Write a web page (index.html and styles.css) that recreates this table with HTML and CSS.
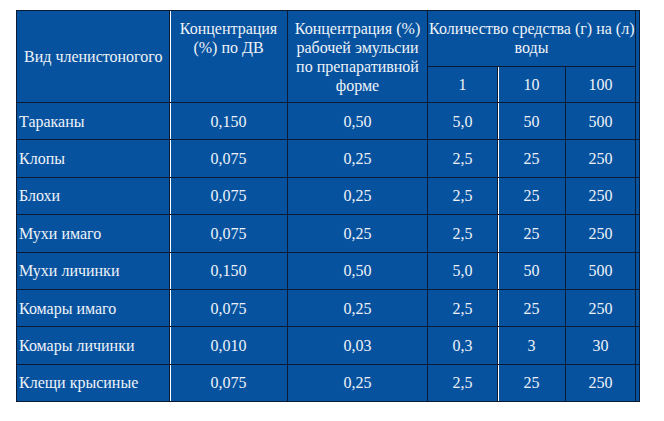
FILE: index.html
```html
<!DOCTYPE html>
<html lang="ru">
<head>
<meta charset="utf-8">
<link rel="stylesheet" href="styles.css">
</head>
<body>
<table class="grid">
  <colgroup>
    <col class="c-name">
    <col class="c-dv">
    <col class="c-em">
    <col class="c-q1">
    <col class="c-q2">
    <col class="c-q3">
    <col class="c-pad">
  </colgroup>
  <thead>
    <tr class="h1">
      <th rowspan="2" class="name-h">Вид членистоногого</th>
      <th rowspan="2" class="top sep">Концентрация<br>(%) по ДВ</th>
      <th rowspan="2">Концентрация (%)<br>рабочей эмульсии<br>по препаративной<br>форме</th>
      <th colspan="3" class="qty-h">Количество средства (г) на (л)<br>воды</th>
      <th rowspan="2" class="pad"></th>
    </tr>
    <tr class="h2">
      <th>1</th>
      <th class="sep">10</th>
      <th>100</th>
    </tr>
  </thead>
  <tbody>
    <tr><td class="name">Тараканы</td><td class="sep">0,150</td><td>0,50</td><td>5,0</td><td class="sep">50</td><td>500</td><td class="pad"></td></tr>
    <tr><td class="name">Клопы</td><td class="sep">0,075</td><td>0,25</td><td>2,5</td><td class="sep">25</td><td>250</td><td class="pad"></td></tr>
    <tr><td class="name">Блохи</td><td class="sep">0,075</td><td>0,25</td><td>2,5</td><td class="sep">25</td><td>250</td><td class="pad"></td></tr>
    <tr><td class="name">Мухи имаго</td><td class="sep">0,075</td><td>0,25</td><td>2,5</td><td class="sep">25</td><td>250</td><td class="pad"></td></tr>
    <tr><td class="name">Мухи личинки</td><td class="sep">0,150</td><td>0,50</td><td>5,0</td><td class="sep">50</td><td>500</td><td class="pad"></td></tr>
    <tr><td class="name">Комары имаго</td><td class="sep">0,075</td><td>0,25</td><td>2,5</td><td class="sep">25</td><td>250</td><td class="pad"></td></tr>
    <tr><td class="name">Комары личинки</td><td class="sep">0,010</td><td>0,03</td><td>0,3</td><td class="sep">3</td><td>30</td><td class="pad"></td></tr>
    <tr><td class="name">Клещи крысиные</td><td class="sep">0,075</td><td>0,25</td><td>2,5</td><td class="sep">25</td><td>250</td><td class="pad"></td></tr>
  </tbody>
</table>
</body>
</html>
```

FILE: styles.css
```css
html, body {
  margin: 0;
  background: #ffffff;
}
body {
  padding: 10px 0 0 16px;
}
.grid {
  border-collapse: collapse;
  table-layout: fixed;
  width: 624px;
  background: #07529f;
  color: #eef2f8;
  font-family: "Liberation Serif", "Times New Roman", serif;
  font-size: 16px;
  line-height: 19px;
}
.c-name { width: 153px; }
.c-dv { width: 118px; }
.c-em { width: 140px; }
.c-q1 { width: 70px; }
.c-q2 { width: 68px; }
.c-q3 { width: 70px; }
.c-pad { width: 4px; }
.grid th, .grid td {
  border: 1px solid #0b1b33;
  padding: 0 1px;
  text-align: center;
  vertical-align: middle;
  font-weight: normal;
  white-space: nowrap;
}
.grid .sep {
  box-shadow: inset 1px 0 0 #ffffff;
}
.grid .name, .grid .name-h {
  text-align: left;
  padding-left: 2px;
}
.grid .name-h {
  padding-left: 7px;
}
.grid .top {
  vertical-align: top;
  padding-top: 8px;
}
.grid .qty-h {
  vertical-align: top;
  padding-top: 8px;
}
.grid .pad {
  padding: 0;
}
.h1 { height: 56px; }
.h2 { height: 36px; }
tbody tr { height: 37.4px; }
```
